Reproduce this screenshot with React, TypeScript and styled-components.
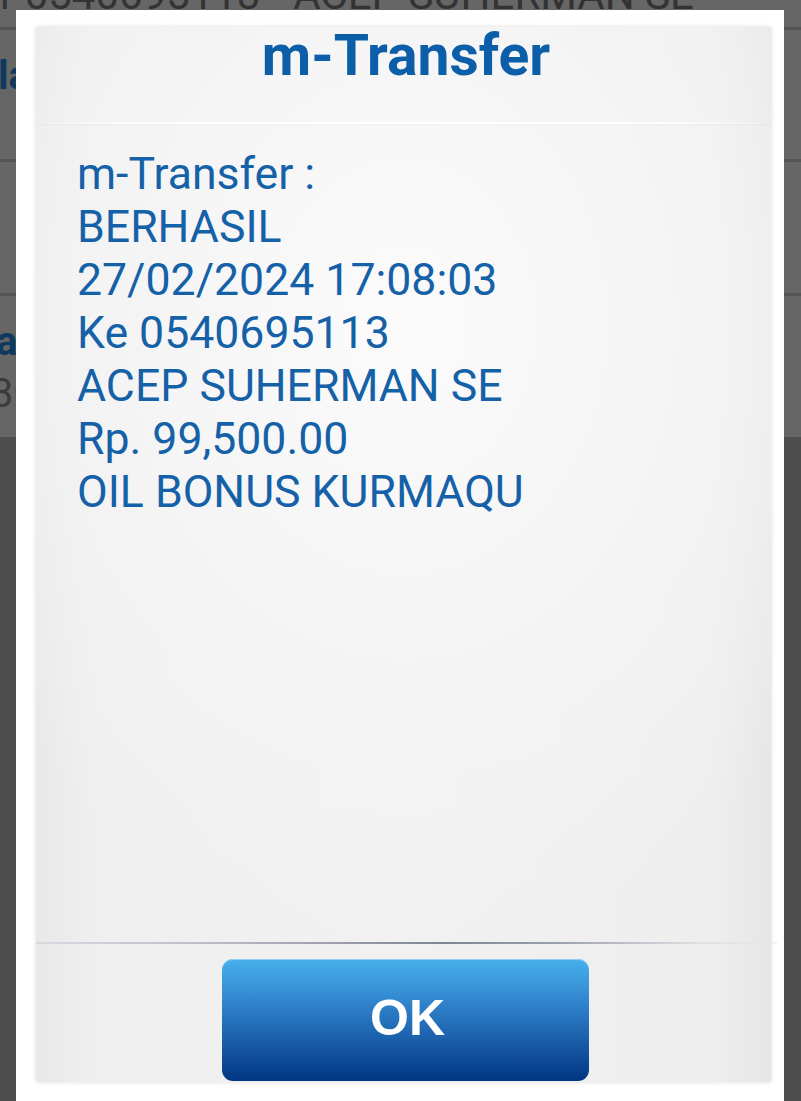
import React from "react";
import styled, { createGlobalStyle } from "styled-components";

const GlobalStyle = createGlobalStyle`
  html, body {
    margin: 0;
    padding: 0;
    background: #4e4e4e;
    overflow: hidden;
  }
  * { box-sizing: border-box; }
`;

const Page = styled.div`
  position: relative;
  width: 801px;
  height: 1101px;
  overflow: hidden;
  background: #4e4e4e;
  font-family: Roboto, "Noto Sans", sans-serif;
`;

const BgList = styled.div`
  display: flex;
  flex-direction: column;
`;

const BgRow = styled.div<{ $h: number; $line?: boolean }>`
  height: ${(p) => p.$h}px;
  background: #666666;
  border-bottom: ${(p) => (p.$line ? "3px solid #545454" : "none")};
  display: flex;
  flex-direction: column;
  overflow: hidden;
`;

const BgText = styled.div<{ $bold?: boolean; $color: string; $shift: number; $top: number; $size?: number }>`
  font-size: ${(p) => p.$size ?? 40}px;
  line-height: ${(p) => p.$size ?? 40}px;
  white-space: nowrap;
  font-weight: ${(p) => (p.$bold ? 700 : 400)};
  color: ${(p) => p.$color};
  margin-left: ${(p) => p.$shift}px;
  margin-top: ${(p) => p.$top}px;
`;

const Dialog = styled.div`
  position: absolute;
  top: 10px;
  left: 16px;
  width: 768px;
  bottom: 0;
  background: #ffffff;
  padding: 17px 13px 19px 20px;
  display: flex;
`;

const Panel = styled.div`
  flex: 1;
  display: flex;
  flex-direction: column;
  background:
    radial-gradient(ellipse 70% 60% at 50% 28%, #fbfbfb 0%, #f4f4f4 55%, rgba(236,236,236,0) 100%),
    linear-gradient(to right, #e8e8e8 0%, #efefef 8%, #f1f1f1 50%, #eeeeee 92%, #e6e6e6 100%);
  box-shadow: 0 0 5px rgba(0, 0, 0, 0.14);
  border-radius: 2px;
`;

const Header = styled.div`
  height: 95px;
  display: flex;
  justify-content: center;
  align-items: flex-start;
`;

const Title = styled.h1`
  margin: 0;
  font-family: Roboto, sans-serif;
  font-weight: 700;
  font-size: 57px;
  line-height: 58px;
  color: #0b5ea7;
  padding-left: 5px;
`;

const HeaderRule = styled.div`
  height: 2px;
  background: linear-gradient(to right, rgba(255,255,255,0) 0%, #ffffff 15%, #ffffff 85%, rgba(255,255,255,0) 100%);
  box-shadow: 0 1px 1px rgba(0,0,0,0.03);
`;

const Body = styled.div`
  flex: 1;
  padding: 24px 0 0 41px;
  display: flex;
  flex-direction: column;
`;

const Line = styled.div`
  font-size: 44.6px;
  line-height: 53px;
  color: #1561a8;
  white-space: nowrap;
`;

const FooterRule = styled.div`
  height: 2px;
  margin-right: -6px;
  background: linear-gradient(to right, #d7dae0 0%, #b6bac3 25%, #7f8592 55%, #9aa0aa 70%, #dfe1e5 90%, rgba(230,232,235,0.6) 100%);
`;

const Footer = styled.div`
  padding: 15px 0 1px 4px;
  display: flex;
  justify-content: center;
`;

const OkButton = styled.button`
  width: 367px;
  height: 122px;
  border: none;
  border-radius: 11px;
  background: linear-gradient(to bottom, #47b0ea 0%, #3a98db 20%, #2a78c2 45%, #14549f 75%, #003582 100%);
  box-shadow: inset 0 1px 0 rgba(160, 215, 245, 0.8);
  color: #ffffff;
  font-family: "Liberation Sans", Arial, sans-serif;
  font-weight: 700;
  font-size: 50px;
  display: flex;
  align-items: center;
  justify-content: center;
  padding: 0 0 4px 4px;
  cursor: pointer;
`;

const lines = [
  "m-Transfer :",
  "BERHASIL",
  "27/02/2024 17:08:03",
  "Ke 0540695113",
  "ACEP SUHERMAN SE",
  "Rp. 99,500.00",
  "OIL BONUS KURMAQU",
];

export default function App() {
  return (
    <>
      <GlobalStyle />
      <Page>
        <BgList>
          <BgRow $h={30} $line>
            <BgText $color="#333333" $shift={0} $top={-26} $size={42}>
              r 0540695113 - ACEP SUHERMAN SE
            </BgText>
          </BgRow>
          <BgRow $h={132} $line>
            <BgText $bold $color="#10395e" $shift={-2} $top={26}>
              lah Transfer
            </BgText>
          </BgRow>
          <BgRow $h={134} $line />
          <BgRow $h={141}>
            <BgText $bold $color="#10395e" $shift={-4} $top={26}>
              a
            </BgText>
            <BgText $color="#3b3b3b" $shift={-9} $top={12}>
              30
            </BgText>
          </BgRow>
        </BgList>
        <Dialog>
          <Panel>
            <Header>
              <Title>m-Transfer</Title>
            </Header>
            <HeaderRule />
            <Body>
              {lines.map((l) => (
                <Line key={l}>{l}</Line>
              ))}
            </Body>
            <FooterRule />
            <Footer>
              <OkButton>OK</OkButton>
            </Footer>
          </Panel>
        </Dialog>
      </Page>
    </>
  );
}
